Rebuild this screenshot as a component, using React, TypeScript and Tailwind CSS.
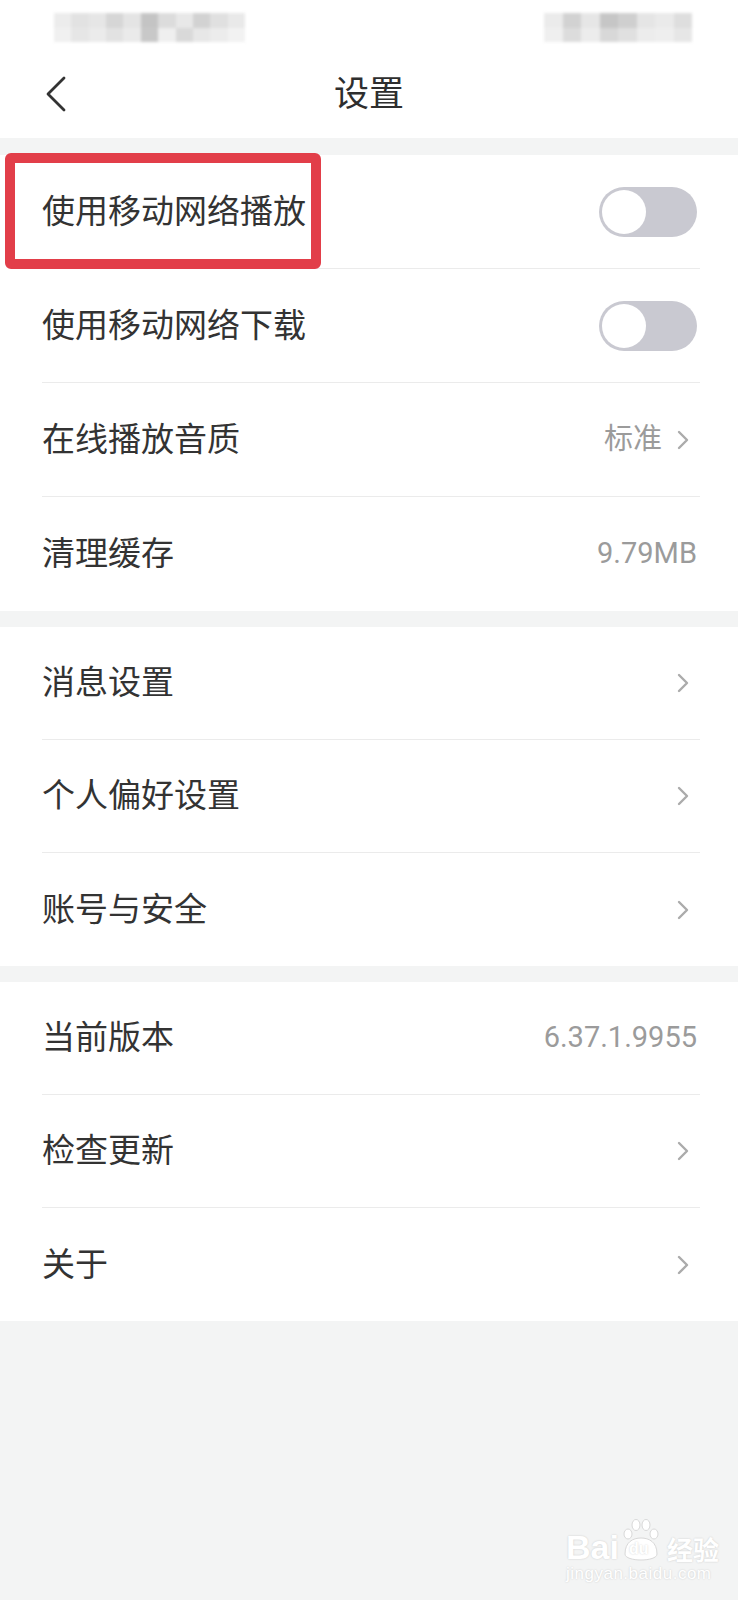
const leftMosaic = ['#ececec', '#e2e2e2', '#e6e6e6', '#d6d6d6', '#e4e4e4', '#c4c4c4', '#dcdcdc', '#e8e8e8', '#d2d2d2', '#e0e0e0', '#e9e9e9'];
const leftMosaic2 = ['#f0f0f0', '#e6e6e6', '#ebebeb', '#e2e2e2', '#eaeaea', '#c8c8c8', '#efefef', '#d9d9d9', '#e7e7e7', '#ececec', '#f2f2f2'];
const rightMosaic = ['#ebebeb', '#d2d2d2', '#e6e6e6', '#c6c6c6', '#cfcfcf', '#e5e5e5', '#eaeaea', '#dedede'];
const rightMosaic2 = ['#efefef', '#dcdcdc', '#ececec', '#d8d8d8', '#e0e0e0', '#ececec', '#eeeeee', '#e6e6e6'];

type Row = {
  label: string;
  value?: string;
  toggle?: boolean;
  arrow?: boolean;
};

const sections: Row[][] = [
  [
    { label: '使用移动网络播放', toggle: true },
    { label: '使用移动网络下载', toggle: true },
    { label: '在线播放音质', value: '标准', arrow: true },
    { label: '清理缓存', value: '9.79MB' },
  ],
  [
    { label: '消息设置', arrow: true },
    { label: '个人偏好设置', arrow: true },
    { label: '账号与安全', arrow: true },
  ],
  [
    { label: '当前版本', value: '6.37.1.9955' },
    { label: '检查更新', arrow: true },
    { label: '关于', arrow: true },
  ],
];

const Mosaic = ({ top, bottom, width }: { top: string[]; bottom: string[]; width: number }) => (
  <div className="flex flex-col blur-[1.5px]" style={{ width }}>
    <div className="flex h-[15px]">
      {top.map((c, i) => (
        <div key={i} className="flex-1" style={{ backgroundColor: c }} />
      ))}
    </div>
    <div className="flex h-[14px]">
      {bottom.map((c, i) => (
        <div key={i} className="flex-1" style={{ backgroundColor: c }} />
      ))}
    </div>
  </div>
);

const Chevron = () => (
  <svg width="12" height="20" viewBox="0 0 12 20" fill="none" className="mr-[8px]">
    <polyline points="2,2 10,10 2,18" stroke="#ababab" strokeWidth="2.4" strokeLinecap="round" strokeLinejoin="round" />
  </svg>
);

const Toggle = () => (
  <div className="w-[98px] h-[50px] rounded-full bg-[#c9c9d1] p-[3px] flex items-center">
    <div className="w-[44px] h-[44px] rounded-full bg-white" />
  </div>
);

const SettingRow = ({ row, last, tall }: { row: Row; last: boolean; tall: boolean }) => (
  <div
    className={`ml-[42px] mr-[38px] flex items-center justify-between pr-[3px] ${tall ? 'h-[114px]' : 'h-[113px]'} ${
      last ? '' : 'border-b border-[#ebebeb]'
    }`}
  >
    <span className="text-[33px] text-[#333333]">{row.label}</span>
    <div className="flex items-center gap-[15px]">
      {row.value && <span className="text-[29px] text-[#9b9b9b]">{row.value}</span>}
      {row.arrow && <Chevron />}
      {row.toggle && <Toggle />}
    </div>
  </div>
);

export default function App() {
  return (
    <div
      className="relative w-[738px] min-h-[1600px] bg-[#f3f4f4] overflow-hidden"
      style={{ fontFamily: 'Roboto, "Noto Sans CJK SC", sans-serif' }}
    >
      <div className="bg-white">
        <div className="h-[52px] flex justify-between items-start pt-[13px] pl-[54px] pr-[46px]">
          <Mosaic top={leftMosaic} bottom={leftMosaic2} width={191} />
          <Mosaic top={rightMosaic} bottom={rightMosaic2} width={148} />
        </div>
        <div className="relative h-[86px] flex items-center justify-center">
          <div className="absolute left-[46px] top-[24px]">
            <svg width="20" height="36" viewBox="0 0 20 36" fill="none">
              <polyline points="18,2 2,18 18,34" stroke="#333333" strokeWidth="2.8" strokeLinecap="round" strokeLinejoin="round" />
            </svg>
          </div>
          <span className="text-[35px] text-[#2e2e2e]">设置</span>
        </div>
      </div>

      {sections.map((rows, si) => (
        <div key={si} className={`bg-white ${si === 0 ? 'mt-[17px]' : 'mt-[16px]'}`}>
          {rows.map((row, ri) => (
            <SettingRow key={row.label} row={row} last={ri === rows.length - 1} tall={si === 0} />
          ))}
        </div>
      ))}

      {/* highlight box */}
      <div className="absolute left-[5px] top-[153px] w-[316px] h-[116px] border-[10px] border-[#e23e49] rounded-[6px]" />

      {/* watermark */}
      <div className="absolute left-[566px] top-[1518px] flex flex-col items-start text-white [text-shadow:0_0_2px_rgba(0,0,0,0.18)]">
        <div className="flex items-end h-[46px]">
          <span className="text-[34px] leading-[34px] font-bold" style={{ fontFamily: 'Arial, "Liberation Sans", sans-serif' }}>Bai</span>
          <div className="relative w-[44px] h-[46px]">
            <svg width="44" height="46" viewBox="0 0 44 46" className="absolute left-0 top-0">
              <g fill="white" stroke="#d8d8d8" strokeWidth="1">
                <ellipse cx="9" cy="16" rx="4" ry="5" />
                <ellipse cx="17" cy="7" rx="4" ry="5.5" />
                <ellipse cx="27" cy="7" rx="4" ry="5.5" />
                <ellipse cx="35" cy="16" rx="4" ry="5" />
                <path d="M6 36 C6 24 14 20 22 20 C30 20 38 24 38 36 C38 44 6 44 6 36 Z" />
              </g>
            </svg>
            <span className="absolute left-[10px] top-[23px] text-[16px] leading-[16px] font-bold text-white" style={{ fontFamily: 'Arial, "Liberation Sans", sans-serif' }}>du</span>
          </div>
          <span className="text-[26px] leading-[30px] font-bold ml-[4px]" style={{ fontFamily: '"Noto Sans CJK SC", sans-serif' }}>经验</span>
        </div>
        <span className="text-[17px] leading-[20px] tracking-[0.5px]" style={{ fontFamily: 'Arial, "Liberation Sans", sans-serif' }}>jingyan.baidu.com</span>
      </div>
    </div>
  );
}
